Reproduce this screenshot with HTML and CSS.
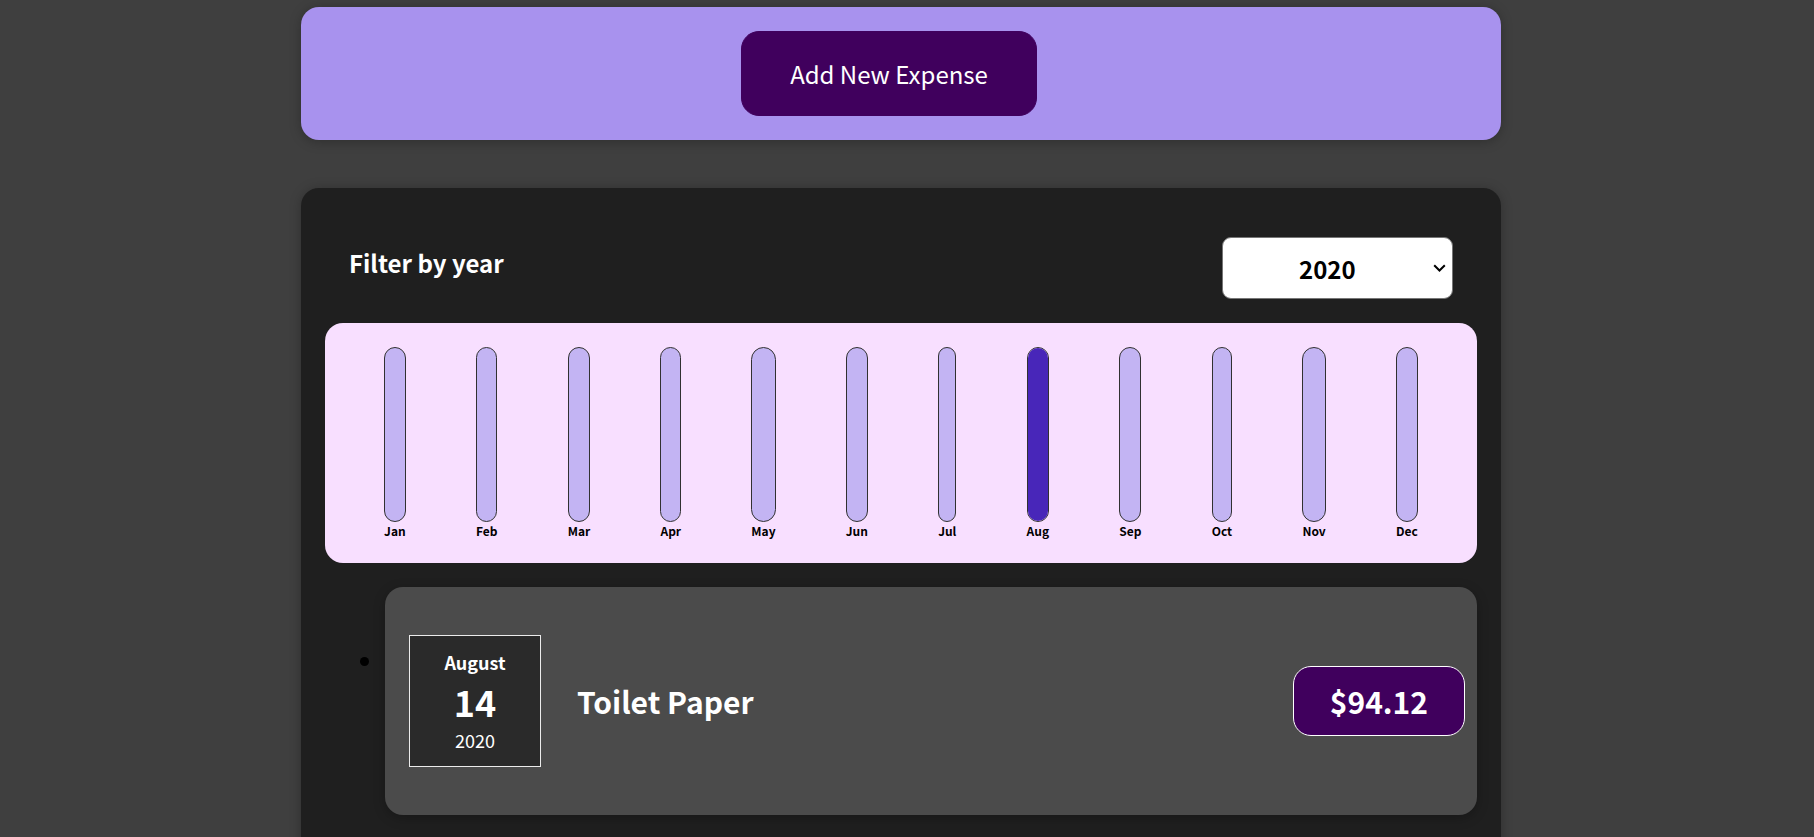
FILE: index.html
```html
<!DOCTYPE html>
<html lang="en">
<head>
<meta charset="utf-8">
<title>Expense Tracker</title>
<link rel="stylesheet" href="styles.css">
</head>
<body>
  <div class="new-expense">
    <button class="new-expense__button" type="button">Add New Expense</button>
  </div>

  <div class="expenses">
    <div class="expenses-filter">
      <div class="expenses-filter__control">
        <label for="year">Filter by year</label>
        <div class="select-wrap">
          <select id="year" class="year-select">
            <option>2022</option>
            <option>2021</option>
            <option selected>2020</option>
            <option>2019</option>
          </select>
          <svg class="select-chevron" width="13" height="8" viewBox="0 0 13 8" aria-hidden="true">
            <path d="M1.2 1.2 L6.5 6.5 L11.8 1.2" fill="none" stroke="#000" stroke-width="2"/>
          </svg>
        </div>
      </div>
    </div>

    <div class="chart">
      <div class="chart-bar"><div class="chart-bar__inner"><div class="chart-bar__fill" style="height:0%"></div></div><div class="chart-bar__label">Jan</div></div>
      <div class="chart-bar"><div class="chart-bar__inner"><div class="chart-bar__fill" style="height:0%"></div></div><div class="chart-bar__label">Feb</div></div>
      <div class="chart-bar"><div class="chart-bar__inner"><div class="chart-bar__fill" style="height:0%"></div></div><div class="chart-bar__label">Mar</div></div>
      <div class="chart-bar"><div class="chart-bar__inner"><div class="chart-bar__fill" style="height:0%"></div></div><div class="chart-bar__label">Apr</div></div>
      <div class="chart-bar"><div class="chart-bar__inner"><div class="chart-bar__fill" style="height:0%"></div></div><div class="chart-bar__label">May</div></div>
      <div class="chart-bar"><div class="chart-bar__inner"><div class="chart-bar__fill" style="height:0%"></div></div><div class="chart-bar__label">Jun</div></div>
      <div class="chart-bar"><div class="chart-bar__inner"><div class="chart-bar__fill" style="height:0%"></div></div><div class="chart-bar__label">Jul</div></div>
      <div class="chart-bar"><div class="chart-bar__inner"><div class="chart-bar__fill" style="height:100%"></div></div><div class="chart-bar__label">Aug</div></div>
      <div class="chart-bar"><div class="chart-bar__inner"><div class="chart-bar__fill" style="height:0%"></div></div><div class="chart-bar__label">Sep</div></div>
      <div class="chart-bar"><div class="chart-bar__inner"><div class="chart-bar__fill" style="height:0%"></div></div><div class="chart-bar__label">Oct</div></div>
      <div class="chart-bar"><div class="chart-bar__inner"><div class="chart-bar__fill" style="height:0%"></div></div><div class="chart-bar__label">Nov</div></div>
      <div class="chart-bar"><div class="chart-bar__inner"><div class="chart-bar__fill" style="height:0%"></div></div><div class="chart-bar__label">Dec</div></div>
    </div>

    <ul class="expenses-list">
      <li>
        <div class="expense-item">
          <div class="expense-date">
            <div class="expense-date__month">August</div>
            <div class="expense-date__day">14</div>
            <div class="expense-date__year">2020</div>
          </div>
          <div class="expense-item__description">
            <h2>Toilet Paper</h2>
            <div class="expense-item__price">$94.12</div>
          </div>
        </div>
      </li>
    </ul>
  </div>
</body>
</html>
```

FILE: styles.css
```css
* {
  box-sizing: border-box;
}

html {
  font-family: "Noto Sans CJK JP", "Noto Sans", "Liberation Sans", sans-serif;
  font-size: 24px;
}

body {
  margin: 0;
  padding-right: 12px;
  background-color: #3f3f3f;
  overflow: hidden;
}

/* New expense panel */
.new-expense {
  background-color: #a892ee;
  padding: 24px;
  margin: 7px auto 48px;
  width: 1200px;
  max-width: 95%;
  border-radius: 18px;
  text-align: center;
  box-shadow: 0 1.5px 12px rgba(0, 0, 0, 0.25);
}

.new-expense__button {
  font: inherit;
  cursor: pointer;
  padding: 24px 48px;
  border: 1px solid #40005d;
  background-color: #40005d;
  color: #ffffff;
  border-radius: 18px;
  margin-right: 24px;
}

/* Expenses card */
.expenses {
  padding: 24px;
  background-color: #1f1f1f;
  margin: 48px auto;
  width: 1200px;
  max-width: 95%;
  border-radius: 18px;
  box-shadow: 0 1.5px 12px rgba(0, 0, 0, 0.25);
}

.expenses-filter {
  color: #ffffff;
  padding: 0 24px;
}

.expenses-filter__control {
  display: flex;
  width: 100%;
  align-items: center;
  justify-content: space-between;
  margin: 25px 0 24px;
}

.expenses-filter label {
  font-weight: bold;
  margin-bottom: 12px;
}

.select-wrap {
  position: relative;
  display: flex;
}

.year-select {
  appearance: none;
  -webkit-appearance: none;
  font: inherit;
  font-weight: bold;
  color: #000000;
  background-color: #ffffff;
  width: 231px;
  height: 62px;
  padding: 0 24px 0 76px;
  border: 1px solid #767676;
  border-radius: 9px;
}

.select-chevron {
  position: absolute;
  right: 7px;
  top: 27px;
  pointer-events: none;
}

/* Chart */
.chart {
  padding: 24px;
  border-radius: 18px;
  background-color: #f8dfff;
  text-align: center;
  display: flex;
  justify-content: space-around;
  height: 240px;
}

.chart-bar {
  height: 100%;
  display: flex;
  flex-direction: column;
  align-items: center;
}

.chart-bar__inner {
  height: 100%;
  width: 100%;
  border: 1px solid #313131;
  border-radius: 18px;
  background-color: #c3b4f3;
  overflow: hidden;
  display: flex;
  flex-direction: column;
  justify-content: flex-end;
}

.chart-bar__fill {
  background-color: #4826b9;
  width: 100%;
}

.chart-bar__label {
  font-weight: bold;
  font-size: 12px;
  text-align: center;
  color: #000000;
}

/* List */
.expenses-list {
  margin: 24px 0;
  padding-left: 60px;
  color: #000000;
}

.expense-item {
  display: flex;
  justify-content: space-between;
  align-items: center;
  box-shadow: 0 3px 12px rgba(0, 0, 0, 0.25);
  padding: 12px;
  margin: 24px 0;
  border-radius: 18px;
  background-color: #4b4b4b;
}

.expense-date {
  display: flex;
  flex-direction: column;
  width: 132px;
  height: 132px;
  flex-shrink: 0;
  margin: 36px 12px;
  border: 1px solid #ececec;
  background-color: #2a2a2a;
  color: #ffffff;
  align-items: center;
  justify-content: center;
}

.expense-date__month {
  font-size: 18px;
  font-weight: bold;
}

.expense-date__year {
  font-size: 18px;
}

.expense-date__day {
  font-size: 36px;
  font-weight: bold;
}

.expense-item__description {
  display: flex;
  flex-direction: row;
  align-items: center;
  justify-content: flex-start;
  flex: 1;
}

.expense-item__description h2 {
  flex: 1;
  margin: 0 24px;
  color: #ffffff;
  font-size: 30px;
}

.expense-item__price {
  font-size: 30px;
  font-weight: bold;
  color: #ffffff;
  background-color: #40005d;
  border: 1px solid #ffffff;
  padding: 12px 36px;
  border-radius: 18px;
}
```
